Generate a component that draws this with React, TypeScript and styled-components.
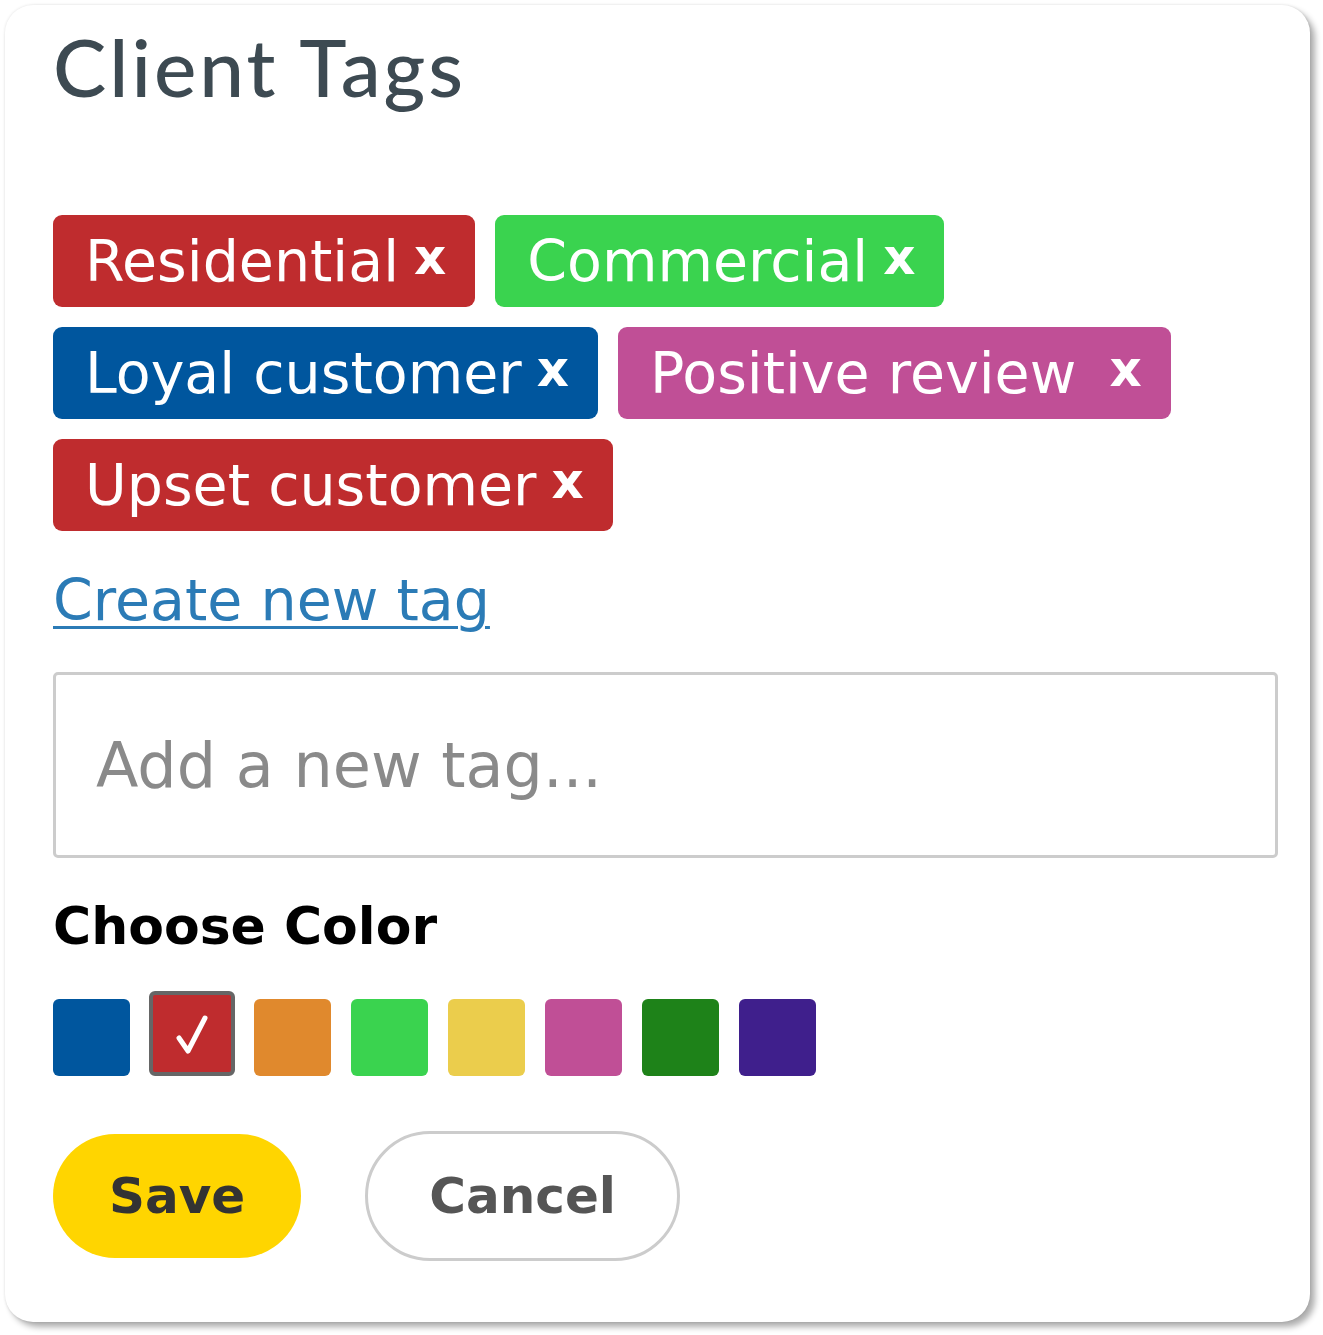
import styled, { createGlobalStyle } from 'styled-components';

const GlobalStyle = createGlobalStyle`
  html, body {
    margin: 0;
    padding: 0;
    background: #ffffff;
  }
  * {
    box-sizing: border-box;
  }
`;

const Page = styled.div`
  padding: 5px 13px 13px 5px;
  width: 1323px;
  font-family: "DejaVu Sans", Verdana, sans-serif;
`;

const Card = styled.div`
  width: 1305px;
  min-height: 1317px;
  background: #ffffff;
  border-radius: 28px;
  box-shadow: 5px 5px 6px rgba(0, 0, 0, 0.32), 0 0 3px rgba(0, 0, 0, 0.12);
  padding: 13px 32px 40px 48px;
  display: flex;
  flex-direction: column;
`;

const Title = styled.h1`
  margin: 0;
  font-family: Lato, "Open Sans", sans-serif;
  font-weight: 500;
  font-size: 80px;
  line-height: 96px;
  color: #3d4a52;
  letter-spacing: 3px;
`;

const TagList = styled.div`
  display: flex;
  flex-wrap: wrap;
  gap: 20px;
  margin-top: 101px;
  max-width: 1120px;
`;

const Tag = styled.div<{ $bg: string }>`
  height: 92px;
  display: inline-flex;
  align-items: center;
  padding: 0 29px 0 32px;
  border-radius: 9px;
  background: ${(p) => p.$bg};
  color: #ffffff;
  font-size: 57px;
  white-space: pre;
`;

const TagLabel = styled.span``;

const Remove = styled.span`
  margin-left: 15px;
  font-size: 50px;
  font-weight: 700;
  line-height: 1;
  position: relative;
  top: -4px;
`;

const CreateLink = styled.a`
  margin-top: 31px;
  align-self: flex-start;
  font-size: 57px;
  line-height: 76px;
  color: #2b7bb6;
  text-decoration: underline;
  text-decoration-thickness: 3px;
  text-underline-offset: 6px;
  cursor: pointer;
`;

const Input = styled.input`
  margin-top: 34px;
  width: 1225px;
  height: 186px;
  border: 3px solid #cccccc;
  border-radius: 5px;
  padding: 0 40px;
  font-family: "DejaVu Sans", Verdana, sans-serif;
  font-size: 62px;
  color: #333;
  outline: none;
  &::placeholder {
    color: #8a8a8a;
  }
`;

const SectionLabel = styled.div`
  margin-top: 30px;
  font-size: 52px;
  font-weight: 700;
  line-height: 76px;
  color: #000000;
`;

const Swatches = styled.div`
  margin-top: 27px;
  display: flex;
  align-items: flex-end;
  gap: 20px;
`;

const Swatch = styled.div<{ $color: string; $selected?: boolean }>`
  width: ${(p) => (p.$selected ? 86 : 77)}px;
  height: ${(p) => (p.$selected ? 85 : 77)}px;
  margin: 0 ${(p) => (p.$selected ? -1 : 0)}px;
  border-radius: 6px;
  background: ${(p) => p.$color};
  border: ${(p) => (p.$selected ? '4px solid #666666' : 'none')};
  display: flex;
  align-items: center;
  justify-content: center;
`;

const Actions = styled.div`
  margin-top: 55px;
  display: flex;
  align-items: center;
  gap: 64px;
`;

const Button = styled.button<{ $primary?: boolean }>`
  height: ${(p) => (p.$primary ? 124 : 130)}px;
  padding: 0 ${(p) => (p.$primary ? 56 : 61)}px;
  border-radius: 65px;
  border: ${(p) => (p.$primary ? 'none' : '3px solid #cccccc')};
  background: ${(p) => (p.$primary ? '#ffd500' : '#ffffff')};
  color: ${(p) => (p.$primary ? '#333333' : '#555555')};
  font-family: "DejaVu Sans", Verdana, sans-serif;
  font-size: 50px;
  font-weight: 700;
  cursor: pointer;
`;

const Check = () => (
  <svg width="34" height="42" viewBox="0 0 34 42" fill="none">
    <path d="M4 25 L13 38 L30 5" stroke="#ffffff" strokeWidth="5" strokeLinecap="round" strokeLinejoin="round" />
  </svg>
);

const tags = [
  { label: 'Residential', color: '#bf2c2e' },
  { label: 'Commercial', color: '#3ad34f' },
  { label: 'Loyal customer', color: '#00569e' },
  { label: 'Positive review ', color: '#c04f96' },
  { label: 'Upset customer', color: '#bf2c2e' },
];

const colors = ['#00569e', '#bf2c2e', '#e0892d', '#3ad34f', '#ebcd4c', '#c04f96', '#1e8219', '#3f1f8c'];

export default function App() {
  return (
    <>
      <GlobalStyle />
      <Page>
        <Card>
          <Title>Client Tags</Title>
          <TagList>
            {tags.map((t) => (
              <Tag key={t.label} $bg={t.color}>
                <TagLabel>{t.label}</TagLabel>
                <Remove>x</Remove>
              </Tag>
            ))}
          </TagList>
          <CreateLink>Create new tag</CreateLink>
          <Input placeholder="Add a new tag..." />
          <SectionLabel>Choose Color</SectionLabel>
          <Swatches>
            {colors.map((c, i) => (
              <Swatch key={c + i} $color={c} $selected={i === 1}>
                {i === 1 ? <Check /> : null}
              </Swatch>
            ))}
          </Swatches>
          <Actions>
            <Button $primary>Save</Button>
            <Button>Cancel</Button>
          </Actions>
        </Card>
      </Page>
    </>
  );
}
